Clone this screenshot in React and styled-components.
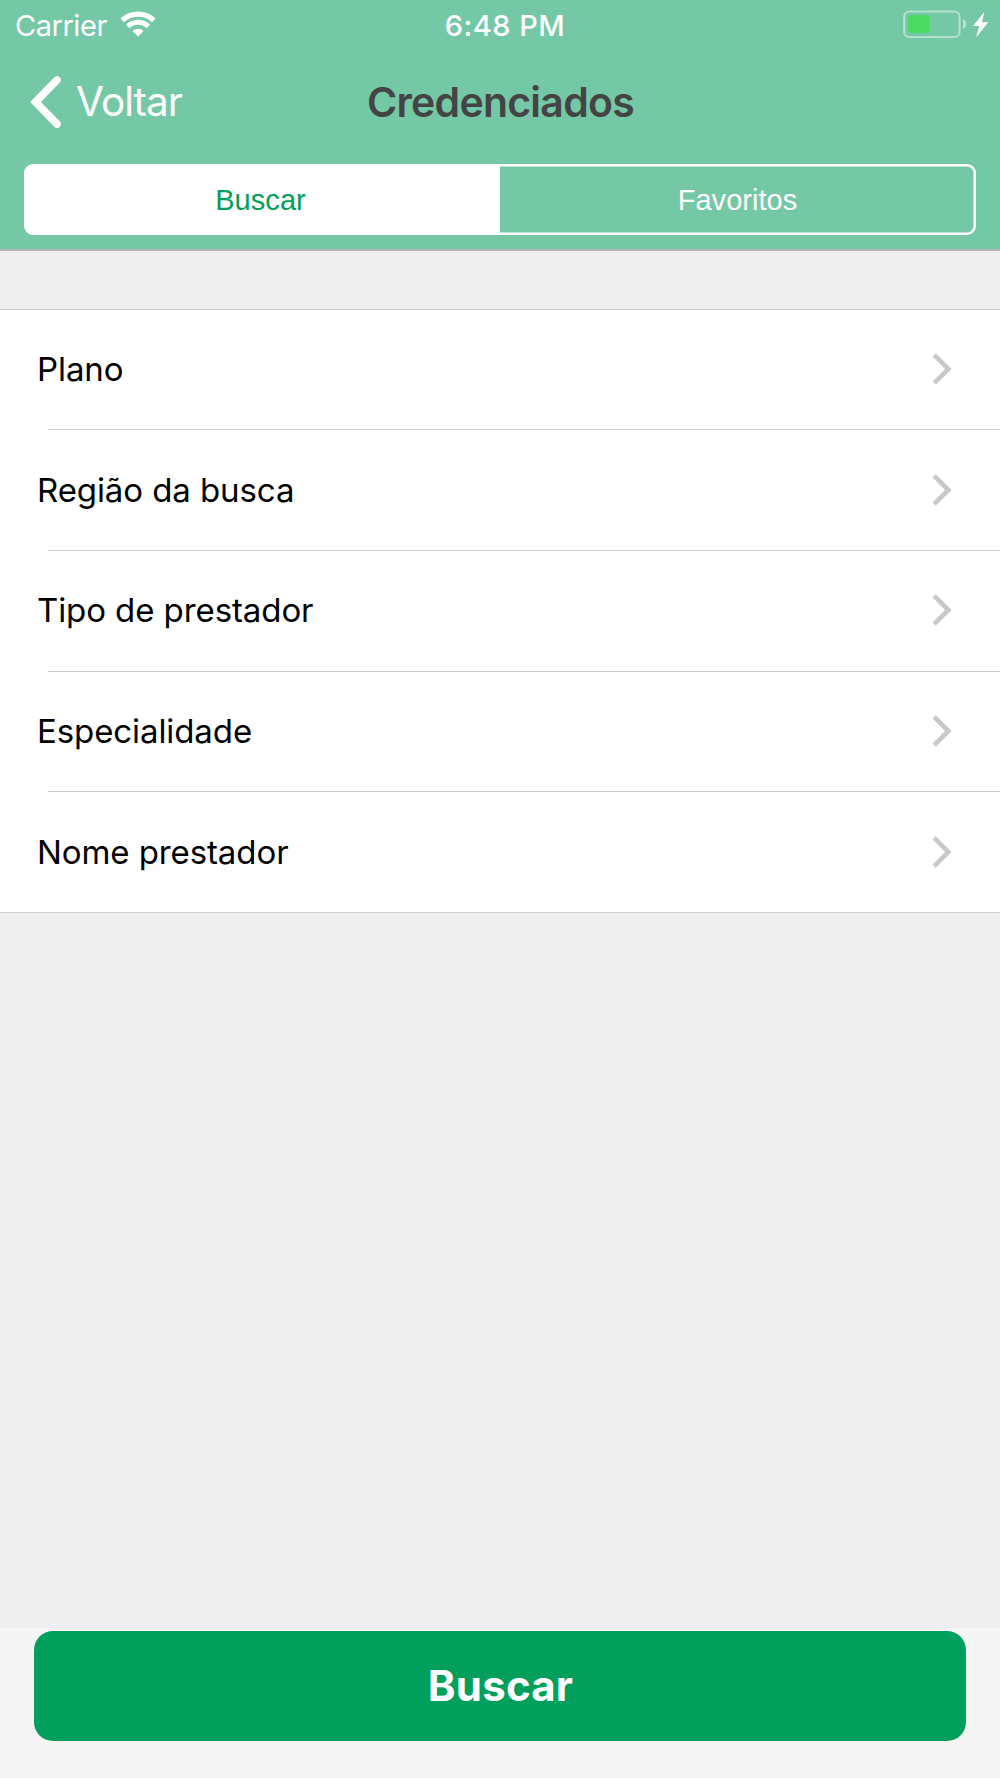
import React from 'react';
import styled, { createGlobalStyle } from 'styled-components';

const colors = {
  header: '#74c8a6',
  accent: '#009f5c',
  page: '#efefef',
  footer: '#f5f5f5',
  line: '#cdcccf',
  title: '#444444',
};

const GlobalStyle = createGlobalStyle`
  body {
    margin: 0;
    background: ${colors.page};
  }
  button {
    border: 0;
    margin: 0;
    padding: 0;
    background: none;
    font: inherit;
    color: inherit;
  }
`;

const Screen = styled.div`
  box-sizing: border-box;
  width: 1000px;
  height: 1778px;
  display: flex;
  flex-direction: column;
  overflow: hidden;
  background: ${colors.page};
  font-family: Inter, 'Liberation Sans', sans-serif;
  color: #000;
`;

const Header = styled.header`
  box-sizing: border-box;
  height: 251px;
  flex: none;
  background: ${colors.header};
  border-bottom: 2px solid #b5b3b4;
  color: #fff;
`;

const StatusBar = styled.div`
  display: grid;
  grid-template-columns: 1fr auto 1fr;
  align-items: center;
  height: 50px;
  padding: 0 5px 0 15px;
  font-size: 29px;
  line-height: 51px;
`;

const CarrierGroup = styled.div`
  display: flex;
  align-items: center;
  gap: 13px;
  letter-spacing: -0.46px;

  svg {
    margin-bottom: 3px;
  }
`;

const Clock = styled.time`
  font-weight: 500;
  letter-spacing: 0.5px;
`;

const Power = styled.div`
  display: flex;
  justify-content: flex-end;
  align-items: center;
  padding: 0 6px 3px 0;
`;

const NavBar = styled.nav`
  display: grid;
  grid-template-columns: 1fr auto 1fr;
  align-items: center;
  height: 102px;
  line-height: 102px;
`;

const BackButton = styled.button`
  display: flex;
  align-items: center;
  gap: 14px;
  padding: 1px 0 0 30px;
  font-size: 40.5px;
  letter-spacing: -1px;
`;

const Title = styled.h1`
  margin: 0;
  padding-left: 1px;
  font-size: 41px;
  font-weight: 600;
  letter-spacing: -0.75px;
  color: ${colors.title};
`;

const Segments = styled.div`
  box-sizing: border-box;
  display: grid;
  grid-template-columns: 1fr 1fr;
  height: 70.5px;
  margin: 12.25px 24px 0;
  border: 2px solid #fff;
  border-radius: 9px;
  box-shadow: inset 0 0 0 0.5px #fff;
  overflow: hidden;
`;

const Segment = styled.button`
  padding: ${(p) => (p.$active ? '1px 5px 0 0' : '1px 0 0 1px')};
  font-family: 'Liberation Sans', Arial, sans-serif;
  font-size: 29px;
  letter-spacing: 0.05px;
  background: ${(p) => (p.$active ? '#fff' : 'transparent')};
  color: ${(p) => (p.$active ? colors.accent : '#fff')};
`;

const Filters = styled.ul`
  flex: none;
  margin: 58px 0 0;
  padding: 0;
  list-style: none;
  background: #fff;
  border-top: 1px solid ${colors.line};
  border-bottom: 1px solid ${colors.line};
`;

const FilterRow = styled.li`
  display: flex;
  align-items: center;
  justify-content: space-between;
  box-sizing: border-box;
  height: 120.75px;
  padding: 0 47px 1.5px 37px;
  font-size: 33px;
  letter-spacing: -0.09px;
  background: linear-gradient(${colors.line}, ${colors.line}) right bottom / calc(100% - 48px) 1px no-repeat;

  &:first-child {
    height: 120px;
    padding-bottom: 2px;
  }
  &:last-child {
    height: 119.75px;
    padding-bottom: 0;
    background: none;
  }
`;

const Footer = styled.footer`
  box-sizing: border-box;
  height: 150px;
  margin-top: auto;
  padding: 2.5px 34px 0;
  background: ${colors.footer};
`;

const SearchButton = styled.button`
  width: 100%;
  height: 110.5px;
  padding-left: 1px;
  border-radius: 19px;
  background: ${colors.accent};
  color: #fff;
  font-size: 42px;
  font-weight: 700;
  letter-spacing: 0.2px;
`;

const Wifi = () => (
  <svg width="36" height="26" viewBox="0 0 36 26" fill="none">
    <path d="M2.200 9.300C11.200 1.100 24.800 1.100 33.800 9.300" stroke="#fff" strokeWidth="5.400" />
    <path d="M7.600 15.300c6-5.300 14.800-5.300 20.800 0" stroke="#fff" strokeWidth="5" />
    <path d="M18 25.500l-5.500-5.500c3.200-2.900 7.800-2.900 11 0z" fill="#fff" />
  </svg>
);

const Battery = () => (
  <svg width="86" height="30" viewBox="903 9 86 30" fill="none">
    <rect x="904.200" y="11.500" width="55.300" height="25.500" rx="5" stroke="#fff" strokeOpacity=".45" strokeWidth="2.200" />
    <path d="M911 15h19v18h-19a3 3 0 0 1-3-3V18a3 3 0 0 1 3-3z" fill="#4cd964" />
    <path d="M963 18.800c4 2 4 8.500 0 10.500z" fill="#fff" fillOpacity=".5" />
    <path d="M984.300 12L973 26h6.400L976 37.500L988.300 22.200h-6.500z" fill="#fff" />
  </svg>
);

const BackChevron = () => (
  <svg width="32" height="52" viewBox="0 0 32 52" fill="none">
    <path d="M27 4L5.500 26L27 48" stroke="#fff" strokeWidth="7.600" strokeLinecap="round" />
  </svg>
);

const Chevron = () => (
  <svg width="21" height="34" viewBox="0 0 21 34" fill="none">
    <path d="M2.200 2.800L16.400 17L2.200 31.200" stroke="#c7c7cc" strokeWidth="4.600" />
  </svg>
);

const filters = ['Plano', 'Região da busca', 'Tipo de prestador', 'Especialidade', 'Nome prestador'];

export default function App() {
  return (
    <Screen>
      <GlobalStyle />
      <Header>
        <StatusBar>
          <CarrierGroup>
            <span>Carrier</span>
            <Wifi />
          </CarrierGroup>
          <Clock>6:48 PM</Clock>
          <Power>
            <Battery />
          </Power>
        </StatusBar>
        <NavBar>
          <BackButton>
            <BackChevron />
            <span>Voltar</span>
          </BackButton>
          <Title>Credenciados</Title>
        </NavBar>
        <Segments>
          <Segment $active>Buscar</Segment>
          <Segment>Favoritos</Segment>
        </Segments>
      </Header>
      <Filters>
        {filters.map((label) => (
          <FilterRow key={label}>
            <span>{label}</span>
            <Chevron />
          </FilterRow>
        ))}
      </Filters>
      <Footer>
        <SearchButton>Buscar</SearchButton>
      </Footer>
    </Screen>
  );
}
